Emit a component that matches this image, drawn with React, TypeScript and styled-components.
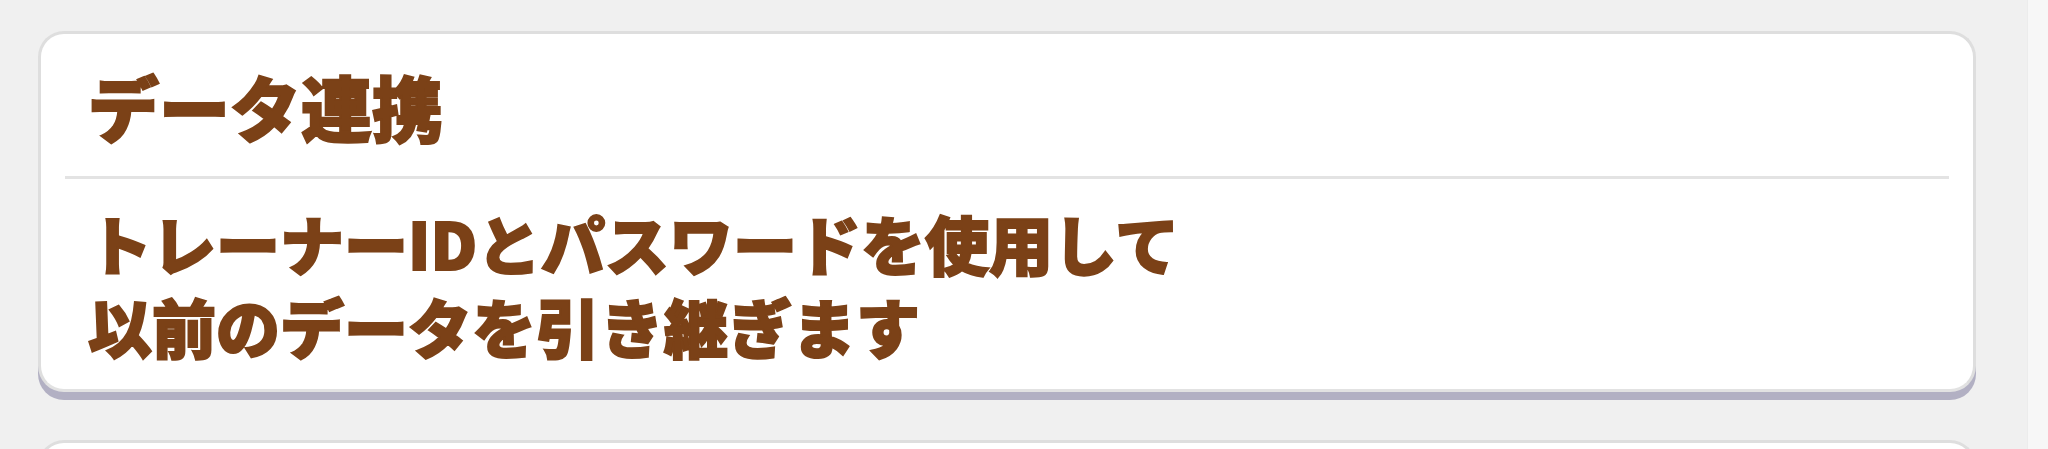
import React from "react";
import styled, { createGlobalStyle } from "styled-components";

const GlobalStyle = createGlobalStyle`
  html, body {
    margin: 0;
    height: 100%;
    overflow: hidden;
    background: #f0f0f0;
  }
  #root {
    height: 100%;
  }
`;

const Page = styled.div`
  display: flex;
  height: 100%;
  font-family: "Noto Sans CJK JP", "Noto Sans", sans-serif;
`;

const Main = styled.main`
  flex: 1;
  display: flex;
  flex-direction: column;
  gap: 48px;
  padding: 31px 51px 0 38px;
  min-width: 0;
`;

// faint scroll track on the right edge
const Track = styled.div`
  width: 20px;
  flex-shrink: 0;
  background: #f7f7f7;
  border-left: 1px solid #ececec;
`;

const Card = styled.section<{ $minHeight?: number }>`
  background: #fff;
  border: 3px solid #dedede;
  border-bottom-color: #e2e2e2;
  border-radius: 26px;
  box-shadow: 0 8px 0 #b2b0c3;
  min-height: ${({ $minHeight }) => ($minHeight ? `${$minHeight}px` : "auto")};
  flex-shrink: 0;
`;

const Header = styled.div`
  height: 142px;
  display: flex;
  align-items: center;
  padding-left: 47px;
`;

const Title = styled.h2`
  margin: 0;
  font-size: 71px;
  font-weight: 900;
  color: #7b4117;
  -webkit-text-stroke: 2px #7b4117;
  line-height: 1;
`;

const Divider = styled.hr`
  margin: 0 24px;
  border: none;
  height: 3px;
  background: #e3e3e3;
`;

const Body = styled.p`
  margin: 0;
  padding: 22px 47px 22px;
  font-size: 64px;
  font-weight: 900;
  line-height: 83px;
  color: #7b4117;
  -webkit-text-stroke: 2px #7b4117;
`;

export default function App() {
  return (
    <>
      <GlobalStyle />
      <Page>
        <Main>
          <Card>
            <Header>
              <Title>データ連携</Title>
            </Header>
            <Divider />
            <Body>
              トレーナーIDとパスワードを使用して
              <br />
              以前のデータを引き継ぎます
            </Body>
          </Card>
          <Card $minHeight={200} />
        </Main>
        <Track />
      </Page>
    </>
  );
}
